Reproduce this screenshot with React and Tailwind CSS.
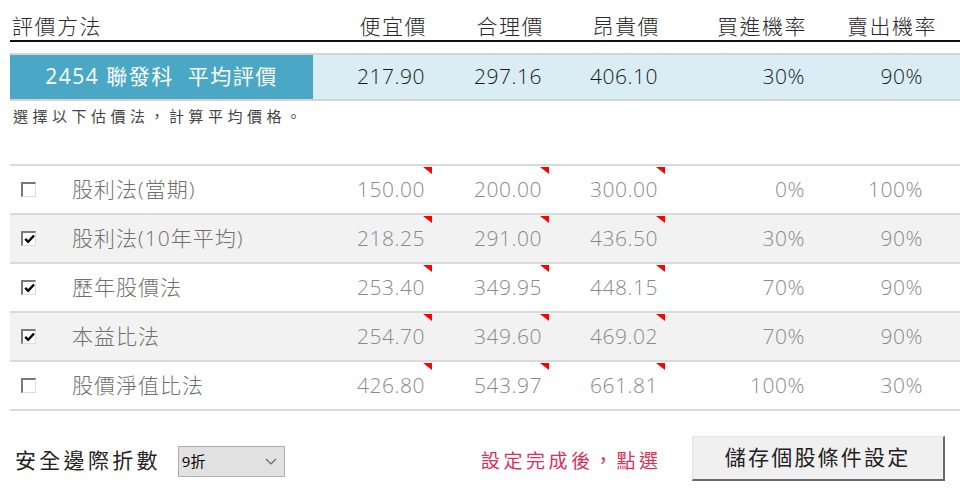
import React from "react";

const rows = [
  { c: false, name: "股利法(當期)", v: ["150.00", "200.00", "300.00", "0%", "100%"], g: false },
  { c: true, name: "股利法(10年平均)", v: ["218.25", "291.00", "436.50", "30%", "90%"], g: true },
  { c: true, name: "歷年股價法", v: ["253.40", "349.95", "448.15", "70%", "90%"], g: false },
  { c: true, name: "本益比法", v: ["254.70", "349.60", "469.02", "70%", "90%"], g: true },
  { c: false, name: "股價淨值比法", v: ["426.80", "543.97", "661.81", "100%", "30%"], g: false },
];

function Tri() {
  return (
    <svg className="absolute top-[1px] right-0" width="9" height="7" viewBox="0 0 9 7">
      <polygon points="0,0 9,0 9,7" fill="#ff0000" />
    </svg>
  );
}

function Check({ on }) {
  return (
    <div className="w-[15px] h-[15px] bg-white border-t-2 border-l-2 border-[#7a7a7a] border-r border-b border-r-[#dcdcdc] border-b-[#dcdcdc] flex items-center justify-center">
      {on && (
        <svg width="11" height="10" viewBox="0 0 11 10">
          <path d="M1.2 4.8 L4.2 7.8 L10 1.5" stroke="#000" strokeWidth="2.4" fill="none" />
        </svg>
      )}
    </div>
  );
}

export default function App() {
  const font = { fontFamily: '"Open Sans", "Noto Sans CJK TC", sans-serif' };
  return (
    <div className="w-[960px] h-[496px] bg-white overflow-hidden pl-[10px] font-light" style={font}>
      {/* header */}
      <div className="flex h-[42px] items-end border-b-2 border-[#111] text-[21px] tracking-[1.5px] text-[#2a2a2a] pb-[2px] leading-[24px]">
        <div className="w-[320px] pl-[2px]">評價方法</div>
        <div className="w-[102px] text-right pr-[5px]">便宜價</div>
        <div className="w-[117px] text-right pr-[5px]">合理價</div>
        <div className="w-[116px] text-right pr-[5px]">昂貴價</div>
        <div className="w-[147px] text-right pr-[5px]">買進機率</div>
        <div className="w-[125px] text-right pr-0">賣出機率</div>
      </div>
      {/* average row */}
      <div className="mt-[11px] flex h-[48px] border-t-2 border-b-2 border-[#d4d4d4] bg-[#daedf4] text-[21px] text-[#1a1a1a]">
        <div className="w-[303px] bg-[#4aa8c6] text-white flex items-center justify-center tracking-[1.5px] font-normal">
          2454 聯發科&nbsp;&nbsp;平均評價
        </div>
        <div className="w-[17px]" />
        <div className="w-[102px] pr-[7px] flex items-center justify-end tracking-[0.5px]">217.90</div>
        <div className="w-[117px] pr-[7px] flex items-center justify-end tracking-[0.5px]">297.16</div>
        <div className="w-[116px] pr-[7px] flex items-center justify-end tracking-[0.5px]">406.10</div>
        <div className="w-[147px] pr-[7px] flex items-center justify-end tracking-[0.5px]">30%</div>
        <div className="w-[125px] pr-[14px] flex items-center justify-end tracking-[0.5px]">90%</div>
      </div>
      <div className="pl-[3px] pt-[4px] text-[15px] tracking-[4.5px] text-[#444] leading-[22px] font-normal">
        選擇以下估價法，計算平均價格。
      </div>
      {/* rows */}
      <div className="mt-[37px] border-t-2 border-[#dadada]">
        {rows.map((r, i) => (
          <div
            key={i}
            className={`flex h-[49px] border-b-2 border-[#dadada] items-stretch text-[21px] text-[#8a8a8a] ${r.g ? "bg-[#f2f2f2]" : "bg-white"}`}
          >
            <div className="w-[320px] flex items-center">
              <div className="w-[62px] pl-[11px]">
                <Check on={r.c} />
              </div>
              <div className="tracking-[1px] text-[#707070]">{r.name}</div>
            </div>
            <div className="w-[102px] relative flex items-center justify-end pr-[7px] tracking-[0.5px]">
              {r.v[0]}
              <Tri />
            </div>
            <div className="w-[117px] relative flex items-center justify-end pr-[7px] tracking-[0.5px]">
              {r.v[1]}
              <Tri />
            </div>
            <div className="w-[116px] relative flex items-center justify-end pr-[7px] tracking-[0.5px]">
              {r.v[2]}
              <Tri />
            </div>
            <div className="w-[147px] flex items-center justify-end pr-[7px] tracking-[0.5px]">{r.v[3]}</div>
            <div className="w-[125px] flex items-center justify-end pr-[14px] tracking-[0.5px]">{r.v[4]}</div>
          </div>
        ))}
      </div>
      {/* bottom */}
      <div className="flex items-center mt-[27px] h-[46px] font-normal">
        <div className="pl-[5px] text-[21px] tracking-[3.3px] text-[#222]">安全邊際折數</div>
        <div className="ml-[17px] w-[107px] h-[31px] bg-[#e1e1e1] border border-[#adadad] flex items-center justify-between pl-[3px] pr-[7px] text-[15px] text-black">
          <span>9折</span>
          <svg width="12" height="7" viewBox="0 0 12 7">
            <path d="M1 1 L6 6 L11 1" stroke="#666" strokeWidth="1.2" fill="none" />
          </svg>
        </div>
        <div className="ml-[196px] text-[19px] tracking-[3.6px] text-[#dc2f5a]">設定完成後，點選</div>
        <div className="ml-[30px] mb-[5px] w-[253px] h-[45px] bg-[#f0f0f0] border-t border-l border-[#e4e4e4] border-r-2 border-b-2 border-r-[#6a6a6a] border-b-[#6a6a6a] flex items-center justify-center text-[21px] tracking-[2.2px] text-[#222]">
          儲存個股條件設定
        </div>
      </div>
    </div>
  );
}
